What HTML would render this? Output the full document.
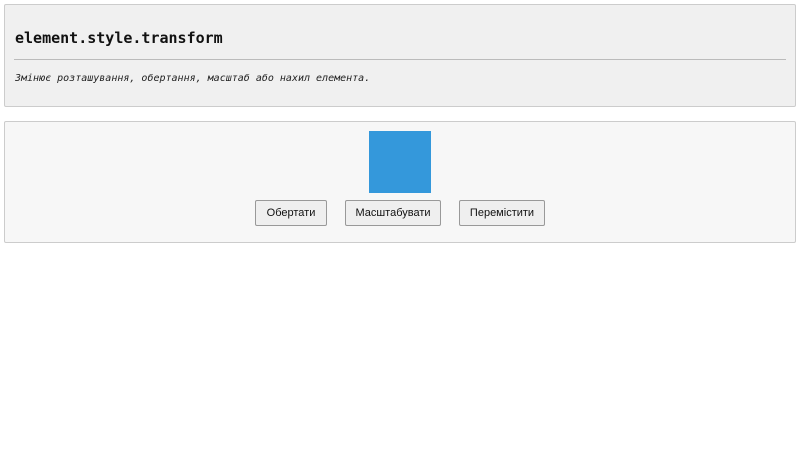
<!DOCTYPE html>
<html><head><meta charset="utf-8"><style>
body{margin:0;width:800px;height:450px;background:#fff;font-family:"Liberation Sans",sans-serif;position:relative}
.p1{position:absolute;left:4px;top:4px;width:790px;height:101px;background:#f0f0f0;border:1px solid #ccc;border-radius:2px}
.t{position:absolute;left:10px;top:24px;font:bold 15px "DejaVu Sans Mono",monospace;color:#111}
.hr{position:absolute;left:9px;top:54px;width:772px;height:1px;background:#bbb}
.d{position:absolute;left:10px;top:68px;font:italic 10px "DejaVu Sans Mono",monospace;color:#222}
.p2{position:absolute;left:4px;top:121px;width:790px;height:120px;background:#f7f7f7;border:1px solid #ccc;border-radius:2px}
.sq{position:absolute;left:369px;top:131px;width:62px;height:62px;background:#3498db}
.b{position:absolute;top:200px;height:26px;box-sizing:border-box;border:1px solid #999;border-radius:2px;background:#efefef;font-size:11px;color:#111;text-align:center;line-height:24px}
</style></head><body>
<div class="p1"><div class="t">element.style.transform</div><div class="hr"></div><div class="d">Змінює розташування, обертання, масштаб або нахил елемента.</div></div>
<div class="p2"></div>
<div class="sq"></div>
<div class="b" style="left:255px;width:72px">Обертати</div>
<div class="b" style="left:345px;width:96px">Масштабувати</div>
<div class="b" style="left:459px;width:86px">Перемістити</div>
</body></html>
